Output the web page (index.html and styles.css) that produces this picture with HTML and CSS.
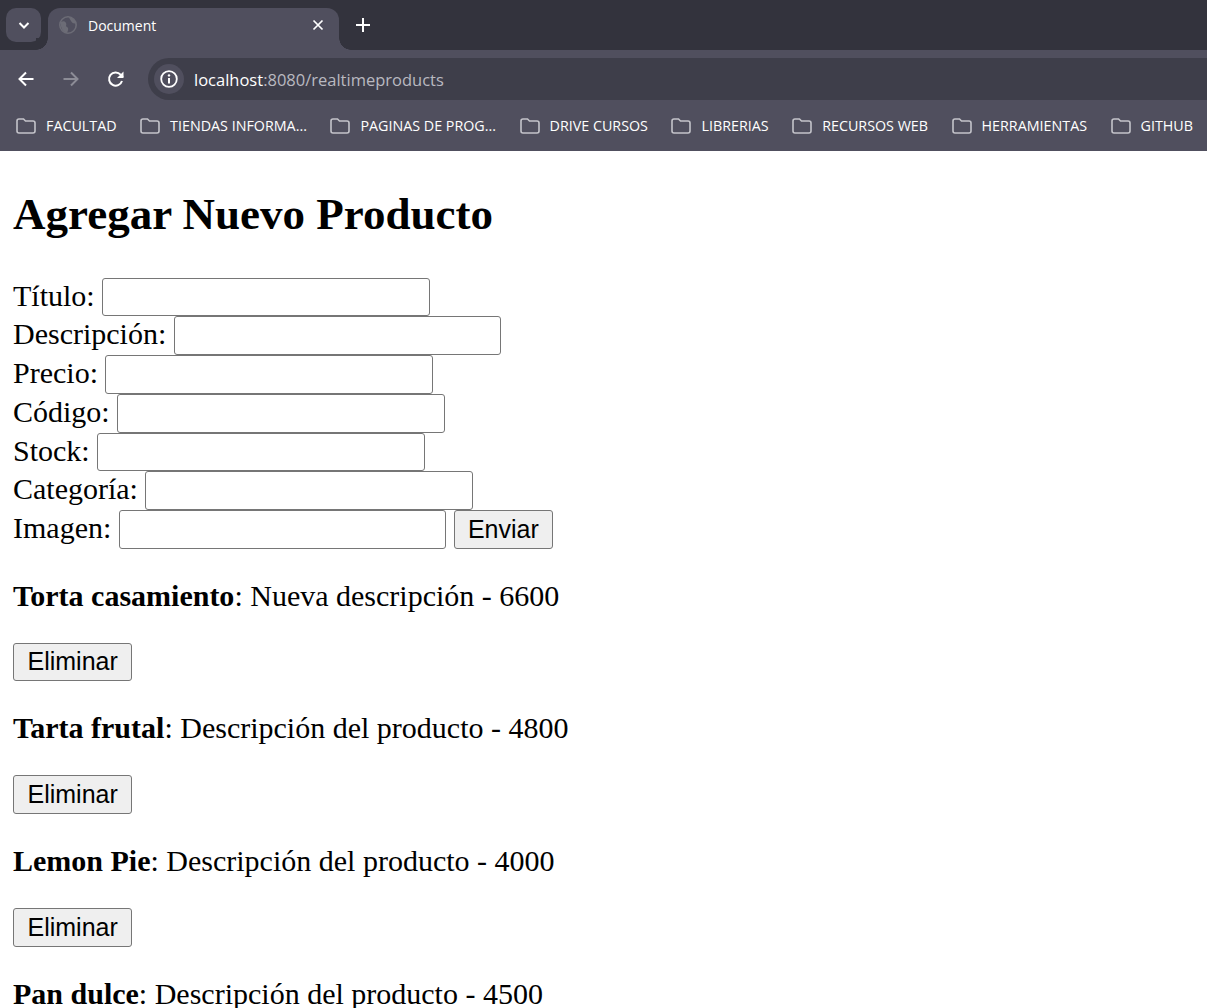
FILE: index.html
```html
<!DOCTYPE html>
<html lang="es">
<head>
    <meta charset="UTF-8">
    <title>Document</title>
    <link rel="stylesheet" href="styles.css">
</head>
<body>
    <header class="browser">
        <div class="tabstrip">
            <div class="tab-search">
                <svg width="12" height="12" viewBox="0 0 12 12"><path d="M1.500 4 6 8.500 10.500 4" fill="none" stroke="#fff" stroke-width="2"/></svg>
            </div>
            <div class="tab">
                <svg class="tab-globe" width="18" height="18" viewBox="0 0 18 18"><circle cx="9" cy="9" r="8.200" fill="#504f5e" stroke="#6c6c76" stroke-width="1.600"/><path d="M2 6c2-1 4-1 5 1s-1 3 1 4 1 4 0 6C4 16 1 12 2 6zM10 1c3 0 6 3 7 6-2 1-4 0-5-2s-2-3-2-4z" fill="#6c6c76"/></svg>
                <span class="tab-title">Document</span>
                <svg class="tab-close" width="12" height="12" viewBox="0 0 12 12"><path d="M1.500 1.500l9 9M10.500 1.500l-9 9" stroke="#fff" stroke-width="1.700"/></svg>
            </div>
            <svg class="tab-new" width="14" height="14" viewBox="0 0 14 14"><path d="M7 0v14M0 7h14" stroke="#fff" stroke-width="2"/></svg>
        </div>
        <div class="toolbar">
            <svg class="nav-icon" width="18" height="18" viewBox="0 0 18 18"><path d="M16.500 9H3M9 2.500 2.500 9 9 15.500" fill="none" stroke="#fff" stroke-width="2"/></svg>
            <svg class="nav-icon" width="18" height="18" viewBox="0 0 18 18"><path d="M1.500 9H15M9 2.500 15.500 9 9 15.500" fill="none" stroke="#8c8c96" stroke-width="2"/></svg>
            <svg class="nav-icon" width="18" height="18" viewBox="0 0 18 18"><path d="M15 11a6.600 6.600 0 1 1-1.400-6.400L16 7" fill="none" stroke="#fff" stroke-width="2"/><path d="M16.500 1.500v6.500H10z" fill="#fff"/></svg>
            <div class="omnibox">
                <div class="site-info">
                    <svg width="18" height="18" viewBox="0 0 18 18"><circle cx="9" cy="9" r="7.800" fill="none" stroke="#fff" stroke-width="1.800"/><path d="M9 8v5.500" stroke="#fff" stroke-width="2"/><circle cx="9" cy="5.400" r="1.200" fill="#fff"/></svg>
                </div>
                <span class="url-host">localhost</span><span class="url-rest">:8080/realtimeproducts</span>
            </div>
        </div>
        <nav class="bookmarks">
            <a class="bookmark"><svg class="folder" viewBox="0 0 20 16"><path d="M1 3a2 2 0 0 1 2-2h4.500l2 2H17a2 2 0 0 1 2 2v8a2 2 0 0 1-2 2H3a2 2 0 0 1-2-2z" fill="none" stroke="#c4c4ca" stroke-width="1.600"/></svg>FACULTAD</a>
            <a class="bookmark"><svg class="folder" viewBox="0 0 20 16"><path d="M1 3a2 2 0 0 1 2-2h4.500l2 2H17a2 2 0 0 1 2 2v8a2 2 0 0 1-2 2H3a2 2 0 0 1-2-2z" fill="none" stroke="#c4c4ca" stroke-width="1.600"/></svg>TIENDAS INFORMA...</a>
            <a class="bookmark"><svg class="folder" viewBox="0 0 20 16"><path d="M1 3a2 2 0 0 1 2-2h4.500l2 2H17a2 2 0 0 1 2 2v8a2 2 0 0 1-2 2H3a2 2 0 0 1-2-2z" fill="none" stroke="#c4c4ca" stroke-width="1.600"/></svg>PAGINAS DE PROG...</a>
            <a class="bookmark"><svg class="folder" viewBox="0 0 20 16"><path d="M1 3a2 2 0 0 1 2-2h4.500l2 2H17a2 2 0 0 1 2 2v8a2 2 0 0 1-2 2H3a2 2 0 0 1-2-2z" fill="none" stroke="#c4c4ca" stroke-width="1.600"/></svg>DRIVE CURSOS</a>
            <a class="bookmark"><svg class="folder" viewBox="0 0 20 16"><path d="M1 3a2 2 0 0 1 2-2h4.500l2 2H17a2 2 0 0 1 2 2v8a2 2 0 0 1-2 2H3a2 2 0 0 1-2-2z" fill="none" stroke="#c4c4ca" stroke-width="1.600"/></svg>LIBRERIAS</a>
            <a class="bookmark"><svg class="folder" viewBox="0 0 20 16"><path d="M1 3a2 2 0 0 1 2-2h4.500l2 2H17a2 2 0 0 1 2 2v8a2 2 0 0 1-2 2H3a2 2 0 0 1-2-2z" fill="none" stroke="#c4c4ca" stroke-width="1.600"/></svg>RECURSOS WEB</a>
            <a class="bookmark"><svg class="folder" viewBox="0 0 20 16"><path d="M1 3a2 2 0 0 1 2-2h4.500l2 2H17a2 2 0 0 1 2 2v8a2 2 0 0 1-2 2H3a2 2 0 0 1-2-2z" fill="none" stroke="#c4c4ca" stroke-width="1.600"/></svg>HERRAMIENTAS</a>
            <a class="bookmark"><svg class="folder" viewBox="0 0 20 16"><path d="M1 3a2 2 0 0 1 2-2h4.500l2 2H17a2 2 0 0 1 2 2v8a2 2 0 0 1-2 2H3a2 2 0 0 1-2-2z" fill="none" stroke="#c4c4ca" stroke-width="1.600"/></svg>GITHUB</a>
        </nav>
    </header>

    <main class="page">
        <h1>Agregar Nuevo Producto</h1>
        <form class="product-form">
            <label>Título:</label> <input type="text"><br>
            <label>Descripción:</label> <input type="text"><br>
            <label>Precio:</label> <input type="text"><br>
            <label>Código:</label> <input type="text"><br>
            <label>Stock:</label> <input type="text"><br>
            <label>Categoría:</label> <input type="text"><br>
            <label>Imagen:</label> <input type="text">
            <button type="submit">Enviar</button>
        </form>

        <div class="product">
            <p><strong>Torta casamiento</strong>: Nueva descripción - 6600</p>
            <button type="button">Eliminar</button>
        </div>
        <div class="product">
            <p><strong>Tarta frutal</strong>: Descripción del producto - 4800</p>
            <button type="button">Eliminar</button>
        </div>
        <div class="product">
            <p><strong>Lemon Pie</strong>: Descripción del producto - 4000</p>
            <button type="button">Eliminar</button>
        </div>
        <div class="product">
            <p><strong>Pan dulce</strong>: Descripción del producto - 4500</p>
        </div>
    </main>
</body>
</html>
```

FILE: styles.css
```css
html, body {
    height: 1008px;
    overflow: hidden;
}

body {
    margin: 0;
    background-color: #fff;
    color: #000;
    font-family: "Liberation Serif", serif;
    font-size: 30px;
}

/* barra del navegador */
.browser {
    font-family: "Open Sans", sans-serif;
    color: #fff;
}

.tabstrip {
    display: flex;
    align-items: flex-end;
    height: 50px;
    background-color: #33333d;
}

.tab-search {
    display: flex;
    align-items: center;
    justify-content: center;
    align-self: flex-start;
    width: 35px;
    height: 34px;
    margin: 8px 7px 0 6px;
    background-color: #504f5e;
    border-radius: 10px;
}

.tab {
    position: relative;
    display: flex;
    align-items: center;
    width: 291px;
    height: 42px;
    padding: 0 15px 8px 11px;
    box-sizing: border-box;
    background-color: #504f5e;
    border-radius: 12px 12px 0 0;
}

.tab::before,
.tab::after {
    content: "";
    position: absolute;
    bottom: 0;
    width: 12px;
    height: 12px;
    background: radial-gradient(circle at 0 0, #33333d 11.500px, #504f5e 12px);
}

.tab::before {
    left: -12px;
}

.tab::after {
    right: -12px;
    transform: scaleX(-1);
}

.tab-title {
    flex: 1;
    margin-left: 11px;
    font-size: 14px;
}

.tab-new {
    margin: 0 0 18px 17px;
}

.toolbar {
    display: flex;
    align-items: center;
    height: 50px;
    padding: 8px 0 0 17px;
    box-sizing: border-box;
    background-color: #504f5e;
}

.nav-icon {
    margin-right: 27px;
}

.nav-icon:nth-child(3) {
    margin-right: 23px;
}

.omnibox {
    display: flex;
    align-items: center;
    flex: 1;
    height: 42px;
    padding-left: 6px;
    background-color: #3e3e4a;
    border-radius: 21px 0 0 21px;
    font-size: 16.500px;
}

.site-info {
    display: flex;
    align-items: center;
    justify-content: center;
    width: 30px;
    height: 30px;
    margin-right: 10px;
    background-color: #504f5e;
    border-radius: 50%;
}

.url-rest {
    color: #b9b9c0;
}

.bookmarks {
    display: flex;
    align-items: center;
    height: 51px;
    padding-left: 16px;
    background-color: #504f5e;
    font-size: 14.300px;
    white-space: nowrap;
}

.bookmark {
    display: flex;
    align-items: center;
    margin-right: 23.500px;
}

.folder {
    width: 20px;
    height: 16px;
    margin-right: 10px;
}

/* contenido */
.page {
    padding: 0 13px;
}

h1 {
    margin: 37px 0 37.750px;
    font-size: 45px;
}

.product-form {
    margin-bottom: 1px;
}

input {
    width: 327.600px;
    height: 38.700px;
    box-sizing: border-box;
    padding: 1px 2px;
    border: 1px solid #767676;
    border-radius: 3px;
    font-family: "Liberation Sans", sans-serif;
    font-size: 25px;
}

button {
    height: 38.700px;
    padding: 0 13.500px;
    background-color: #efefef;
    border: 1px solid #767676;
    border-radius: 3px;
    font-family: "Liberation Sans", sans-serif;
    font-size: 25px;
}

.product-form button {
    padding: 0 13px;
}

.product p {
    margin: 30px 0;
}
```
